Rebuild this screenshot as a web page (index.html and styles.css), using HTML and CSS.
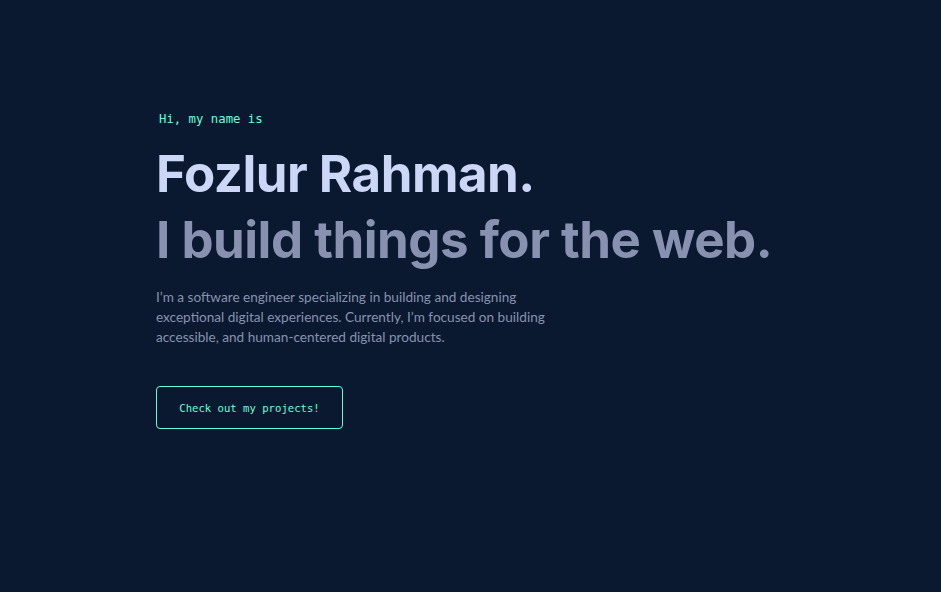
FILE: index.html
```html
<!DOCTYPE html>
<html lang="en">
<head>
<meta charset="utf-8">
<title>Fozlur Rahman</title>
<link rel="stylesheet" href="styles.css">
</head>
<body>
<main class="hero">
  <p class="hero-intro">Hi, my name is</p>
  <h1 class="hero-name">Fozlur Rahman.</h1>
  <h2 class="hero-tagline">I build things for the web.</h2>
  <p class="hero-text">I’m a software engineer specializing in building and designing exceptional digital experiences. Currently, I’m focused on building accessible, and human-centered digital products.</p>
  <a class="hero-button" href="#projects">Check out my projects!</a>
</main>
</body>
</html>
```
FILE: styles.css
```css
html, body {
  margin: 0;
  padding: 0;
  background: #0a192f;
  height: 100%;
}
body {
  font-family: Inter, "Noto Sans", sans-serif;
  color: #8892b0;
}
.hero {
  display: flex;
  flex-direction: column;
  align-items: flex-start;
  padding: 110px 0 0 156px;
}
.hero-intro {
  margin: 0 0 0 3px;
  font-family: "DejaVu Sans Mono", "Liberation Mono", monospace;
  font-size: 12.3px;
  line-height: 18px;
  color: #64ffda;
}
.hero-name, .hero-tagline {
  margin: 0;
  font-size: 51px;
  font-weight: 700;
  line-height: 66px;
  letter-spacing: -0.5px;
}
.hero-name {
  margin-top: 13px;
  color: #ccd6f6;
}
.hero-tagline {
  color: #8892b0;
}
.hero-text {
  margin: 14px 0 0 0;
  max-width: 392px;
  font-family: Lato, "Noto Sans", sans-serif;
  font-size: 13.6px;
  line-height: 20px;
  color: #8892b0;
}
.hero-button {
  margin-top: 39px;
  display: inline-flex;
  align-items: center;
  justify-content: center;
  width: 185px;
  height: 41px;
  border: 1px solid #64ffda;
  border-radius: 4px;
  color: #64ffda;
  text-decoration: none;
  font-family: "DejaVu Sans Mono", "Liberation Mono", monospace;
  font-size: 10.6px;
}
```
